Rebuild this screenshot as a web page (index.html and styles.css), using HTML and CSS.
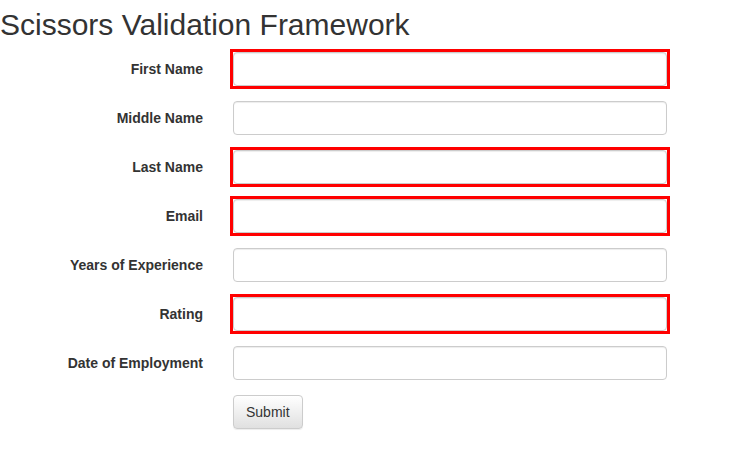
FILE: index.html
```html
<!DOCTYPE html>
<html>
<head>
<meta charset="utf-8">
<link rel="stylesheet" href="styles.css">
</head>
<body>
<h2 class="title">Scissors Validation Framework</h2>
<form class="form">
  <div class="row"><label class="lbl">First Name</label><div class="ctl"><div class="invalid"><input class="inp" type="text"></div></div></div>
  <div class="row"><label class="lbl">Middle Name</label><div class="ctl"><input class="inp" type="text"></div></div>
  <div class="row"><label class="lbl">Last Name</label><div class="ctl"><div class="invalid"><input class="inp" type="text"></div></div></div>
  <div class="row"><label class="lbl">Email</label><div class="ctl"><div class="invalid"><input class="inp" type="text"></div></div></div>
  <div class="row"><label class="lbl">Years of Experience</label><div class="ctl"><input class="inp" type="text"></div></div>
  <div class="row"><label class="lbl">Rating</label><div class="ctl"><div class="invalid"><input class="inp" type="text"></div></div></div>
  <div class="row"><label class="lbl">Date of Employment</label><div class="ctl"><input class="inp" type="text"></div></div>
  <div class="row"><div class="lbl"></div><div class="ctl"><button class="btn" type="button">Submit</button></div></div>
</form>
</body>
</html>
```
FILE: styles.css
```css
* { box-sizing: border-box; }
body {
  margin: 0;
  font-family: "Liberation Sans", Arial, Helvetica, sans-serif;
  font-size: 14px;
  line-height: 1.42857;
  color: #333;
  background: #fff;
}
.title {
  margin: 8px 0 11px 0;
  font-size: 30px;
  font-weight: 500;
  line-height: 1.1;
}
.form { display: block; }
.row {
  display: grid;
  grid-template-columns: 218px 464px;
  margin-bottom: 15px;
}
.lbl {
  padding: 8px 15px 0 0;
  text-align: right;
  font-weight: bold;
}
.ctl { padding: 0 15px; }
.inp {
  display: block;
  width: 100%;
  height: 34px;
  padding: 6px 12px;
  font: inherit;
  border: 1px solid #ccc;
  border-radius: 4px;
  background: #fff;
  box-shadow: inset 0 1px 1px rgba(0,0,0,.075);
}
.invalid { outline: 3px solid #f00; }
.btn {
  display: inline-block;
  padding: 7px 12px 5px;
  height: 34px;
  font: inherit;
  color: #333;
  border: 1px solid #ccc;
  border-radius: 4px;
  background: linear-gradient(to bottom, #fff 0, #e0e0e0 100%);
  box-shadow: inset 0 1px 0 rgba(255,255,255,.15), 0 1px 1px rgba(0,0,0,.075);
}
```
